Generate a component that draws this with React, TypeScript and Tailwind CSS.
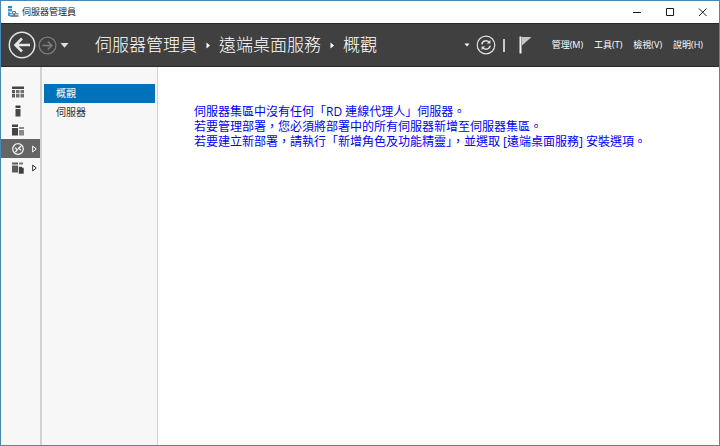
import type { ReactNode } from 'react';

const menus = ['管理(M)', '工具(T)', '檢視(V)', '說明(H)'];
const crumbs = ['伺服器管理員', '遠端桌面服務', '概觀'];

function AppIcon() {
  return (
    <svg width="12" height="12" viewBox="0 0 12 12" aria-hidden="true">
      <path d="M1 0h4v2.3H1z" fill="#1b8ad0" />
      <path d="M1 3h4v2.5H1zM1 6.2h2V10H1z" fill="#3c9bd6" />
      <path d="M5.5 7V5.5h3V7" fill="none" stroke="#5b7488" />
      <path d="M3 7h8.5v4H3z" fill="#7892a5" />
      <path d="M3 8.5h8.5" stroke="#dce8f0" strokeWidth="0.8" />
      <path d="M6.5 8h1.5v1.5H6.5z" fill="#3f5d73" />
    </svg>
  );
}

function WindowButton({ label, children }: { label: string; children: ReactNode }) {
  return (
    <button aria-label={label} className="flex h-full w-[33px] items-center justify-center">
      <svg width="9" height="9" viewBox="0 0 9 9" fill="none" stroke="#1a1a1a">
        {children}
      </svg>
    </button>
  );
}

function TitleBar() {
  return (
    <div className="flex h-[22px] items-center justify-between bg-white pl-1.5">
      <div className="flex items-center gap-[3px] text-[9px] text-[#222]">
        <AppIcon />
        <span>伺服器管理員</span>
      </div>
      <div className="flex h-full items-center">
        <WindowButton label="最小化">
          <path d="M1 4.5h8" />
        </WindowButton>
        <WindowButton label="最大化">
          <path d="M1.5 0.5h7v7h-7z" />
        </WindowButton>
        <WindowButton label="關閉">
          <path d="M1 0.5l7.5 7.5M8.5 0.5L1 8" />
        </WindowButton>
      </div>
    </div>
  );
}

function Header() {
  return (
    <header className="flex h-[44px] items-center justify-between border-y border-[#2a2a2a] bg-[#404040] pr-4 pl-[7px] text-white">
      <div className="flex items-center">
        <button aria-label="上一頁">
          <svg width="28" height="28" viewBox="0 0 28 28" fill="none" stroke="#e4e4e4" className="block">
            <circle cx="14" cy="14" r="12.7" strokeWidth="1.5" />
            <path d="M22 14H8M14 7.5L7.5 14l6.5 6.5" strokeWidth="2.6" />
          </svg>
        </button>
        <button aria-label="下一頁" className="ml-0.5">
          <svg width="19" height="19" viewBox="0 0 19 19" fill="none" stroke="#7b7b7b" className="block">
            <circle cx="9.5" cy="9.5" r="8.4" strokeWidth="1.3" />
            <path d="M4.5 9.5h9M9.8 5.5l4 4-4 4" strokeWidth="1.7" />
          </svg>
        </button>
        <button aria-label="歷程記錄" className="ml-[3px]">
          <svg width="9" height="5" viewBox="0 0 9 5" fill="#dedede" className="block">
            <path d="M0.5 0h8l-4 4.8z" />
          </svg>
        </button>
        <nav className="ml-[26px] flex items-center gap-2 text-[17px] leading-6 font-light">
          {crumbs.map((crumb, i) => (
            <span key={crumb} className="flex items-center gap-2">
              {i > 0 && (
                <svg width="6" height="7" viewBox="0 0 6 7" fill="#fff">
                  <path d="M1.5 0.5l3.5 3-3.5 3z" />
                </svg>
              )}
              {crumb}
            </span>
          ))}
        </nav>
      </div>
      <div className="flex items-center">
        <button aria-label="重新整理選項">
          <svg width="6" height="4" viewBox="0 0 6 4" fill="#fff" className="block">
            <path d="M0.5 0.5h5L3 3.5z" />
          </svg>
        </button>
        <button aria-label="重新整理" className="ml-1.5">
          <svg width="20" height="20" viewBox="0 0 20 20" fill="none" stroke="#e0e0e0" className="block">
            <circle cx="10" cy="10" r="8.8" strokeWidth="1.2" />
            <path d="M5.8 9.3c.5-2.2 2-3.5 4.2-3.5 1.2 0 2.3.5 3.2 1.4M14.2 10.7c-.5 2.2-2 3.5-4.2 3.5-1.2 0-2.3-.5-3.2-1.4" strokeWidth="1.5" />
            <path d="M14.4 5v3.6h-3.6zM5.6 15v-3.6h3.6z" fill="#e0e0e0" stroke="none" />
          </svg>
        </button>
        <div className="ml-[7px] h-[13px] w-0.5 bg-[#c8c8c8]" />
        <button aria-label="通知" className="ml-3.5">
          <svg width="13" height="18" viewBox="0 0 13 18" className="block">
            <path d="M0.5 0.5h2v17h-2z" fill="#f2f2f2" />
            <path d="M3 1h9.5L3 9.5z" fill="#c6c6c6" />
          </svg>
        </button>
        <div className="ml-5 flex gap-[11px] text-[9px]">
          {menus.map((menu) => (
            <button key={menu}>{menu}</button>
          ))}
        </div>
      </div>
    </header>
  );
}

const railItems = [
  {
    label: '儀表板',
    icon: (
      <>
        <path d="M0 0.5h12V3H0z" fill="#454545" />
        <path d="M0 4h3v3.2H0zM0 8h3v3.5H0z" fill="#5a5a5a" />
        <path d="M4 4h3.5v3.2H4zM8.5 4H12v3.2H8.5zM4 8h3.5v3.5H4zM8.5 8H12v3.5H8.5z" fill="#6f6f6f" />
      </>
    ),
  },
  {
    label: '本機伺服器',
    icon: (
      <>
        <path d="M3.5 0.5h5V3h-5z" fill="#3f3f3f" />
        <path d="M3.5 4h5v7.5h-5z" fill="#484848" />
      </>
    ),
  },
  {
    label: '所有伺服器',
    icon: (
      <>
        <path d="M0 0.5h6V3H0zM0 4h6v7.5H0z" fill="#454545" />
        <path d="M7 3h5v2H7zM7 6h5v5.5H7z" fill="#8a8a8a" />
      </>
    ),
  },
  {
    label: '遠端桌面服務',
    selected: true,
    expandable: true,
    icon: (
      <g fill="none" stroke="#f2f2f2">
        <circle cx="6" cy="6" r="5.3" strokeWidth="1.3" />
        <path d="M3 4.7l2.4 1.8L3.4 9M9 3l-2.4 2.3L9 7.3" strokeWidth="1.3" />
      </g>
    ),
  },
  {
    label: '檔案和存放服務',
    expandable: true,
    icon: (
      <>
        <path d="M0 0.5h6v2H0zM0 3.5h6v7H0z" fill="#5a5a5a" />
        <path d="M7 0.5h4v2H7z" fill="#777" />
        <path d="M6.5 4.5h3l1 1H12V12H6.5z" fill="#3f3f3f" stroke="#f7f7f7" strokeWidth="0.6" />
      </>
    ),
  },
];

function Rail() {
  return (
    <nav className="w-[41px] shrink-0 border-r-2 border-[#d2d2d2] bg-[#f7f7f7] pt-[15px]">
      {railItems.map((item) => (
        <button
          key={item.label}
          aria-label={item.label}
          className={`flex h-[19px] w-full items-center gap-2 pl-[11px] ${item.selected ? 'bg-[#656565]' : ''}`}
        >
          <svg width="12" height="12" viewBox="0 0 12 12">
            {item.icon}
          </svg>
          {item.expandable && (
            <svg width="5" height="8" viewBox="0 0 5 8" fill="none" stroke={item.selected ? '#fff' : '#333'}>
              <path d="M0.7 1v6l3.6-3z" />
            </svg>
          )}
        </button>
      ))}
    </nav>
  );
}

function SubNav() {
  return (
    <nav className="w-[116px] shrink-0 border-r border-[#d2d2d2] bg-[#f7f7f7] px-0.5 pt-[17px] text-[10px]">
      <a href="#overview" className="flex h-[19px] items-center bg-[#0072bc] pl-3 text-white">
        概觀
      </a>
      <a href="#servers" className="flex h-[19px] items-center pl-3 text-[#333]">
        伺服器
      </a>
    </nav>
  );
}

export default function App() {
  return (
    <div
      lang="zh-Hant"
      className="flex min-h-screen flex-col border border-[#4a88b8] bg-white font-['Open_Sans','Noto_Sans_CJK_TC',sans-serif]"
    >
      <TitleBar />
      <Header />
      <div className="flex flex-1">
        <Rail />
        <SubNav />
        <main className="flex-1 pt-[37px] pl-9">
          <p className="text-[12px] leading-[15px] text-[#0000ff]">
            伺服器集區中沒有任何「RD 連線代理人」伺服器。
            <br />
            若要管理部署，您必須將部署中的所有伺服器新增至伺服器集區。
            <br />
            若要建立新部署，請執行「新增角色及功能精靈」，並選取 [遠端桌面服務] 安裝選項。
          </p>
        </main>
      </div>
    </div>
  );
}
